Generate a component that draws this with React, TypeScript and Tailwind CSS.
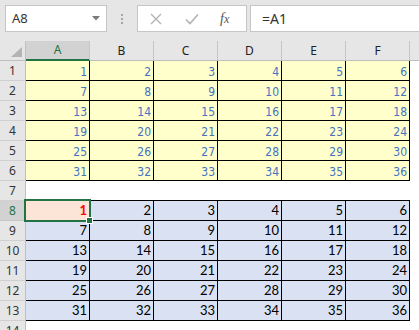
import React from "react";

const COLS = ["A", "B", "C", "D", "E", "F"];

function Toolbar() {
  return (
    <div className="h-[41px] bg-[#e6e6e6] flex items-start pt-[5px] pl-[5px] overflow-hidden">
      <div className="w-[102px] h-[27px] flex-none bg-white border border-[#c6c6c6] flex items-center justify-between pl-[6px] pr-[6px]">
        <span className="text-[13px] text-[#333] font-['Noto_Sans',sans-serif] leading-none">A8</span>
        <svg width="8" height="5" viewBox="0 0 8 5">
          <polygon points="0,0 8,0 4,4.5" fill="#7a7a7a" />
        </svg>
      </div>
      <div className="w-[30px] h-[27px] flex-none flex flex-col items-center justify-center gap-[2px]">
        <span className="w-[2px] h-[2px] bg-[#a6a6a6]" />
        <span className="w-[2px] h-[2px] bg-[#a6a6a6]" />
        <span className="w-[2px] h-[2px] bg-[#a6a6a6]" />
      </div>
      <div className="w-[110px] h-[27px] flex-none bg-white border border-[#c6c6c6] flex items-center pl-[12px]">
        <svg width="12" height="12" viewBox="0 0 12 12" className="flex-none">
          <path d="M1 1 L11 11 M11 1 L1 11" stroke="#b3b3b3" strokeWidth="1.4" fill="none" />
        </svg>
        <svg width="14" height="12" viewBox="0 0 14 12" className="flex-none ml-[23px]">
          <path d="M1 6.5 L5 10.5 L13 1.5" stroke="#b3b3b3" strokeWidth="1.6" fill="none" />
        </svg>
        <span className="ml-[21px] text-[14px] italic text-[#555] font-['Liberation_Serif',serif] leading-none">
          f<span className="text-[12px]">x</span>
        </span>
      </div>
      <div className="w-[180px] h-[27px] flex-none ml-[3px] bg-white border border-[#c6c6c6] flex items-center pl-[11px]">
        <span className="text-[14px] text-[#333] font-['Noto_Sans',sans-serif] leading-none">=A1</span>
      </div>
    </div>
  );
}

export default function App() {
  const rows = Array.from({ length: 14 }, (_, i) => i + 1);
  return (
    <div className="relative w-[419px] h-[330px] overflow-hidden bg-white">
      <Toolbar />
      <div className="grid grid-cols-[26px_repeat(6,64px)_1fr] auto-rows-[20px] font-['Noto_Sans',sans-serif]">
        {/* header row */}
        <div className="bg-[#e6e6e6] border-r border-b border-[#bfbfbf] flex items-end justify-end pr-[3px] pb-[3px]">
          <svg width="11" height="10" viewBox="0 0 11 10">
            <polygon points="11,0 11,10 0,10" fill="#b4b4b4" />
          </svg>
        </div>
        {COLS.map((c) =>
          c === "A" ? (
            <div
              key={c}
              className="bg-[#d2d2d2] border-r border-r-[#c6c6c6] border-b-2 border-b-[#217346] flex items-center justify-center text-[12px] text-[#217346] leading-none"
            >
              {c}
            </div>
          ) : (
            <div
              key={c}
              className="bg-[#e6e6e6] border-r border-r-[#c6c6c6] border-b border-b-[#bfbfbf] flex items-center justify-center text-[12px] text-[#222] leading-none"
            >
              {c}
            </div>
          )
        )}
        <div className="bg-[#e6e6e6] border-b border-[#bfbfbf]" />

        {rows.map((r) => {
          const isTop = r <= 6;
          const isBottom = r >= 8 && r <= 13;
          const sel = r === 8;
          return (
            <React.Fragment key={r}>
              <div
                className={
                  sel
                    ? "bg-[#d2d2d2] border-r border-r-[#bfbfbf] border-b border-b-[#c6c6c6] flex items-center justify-center text-[12px] text-[#217346] leading-none"
                    : "bg-[#e6e6e6] border-r border-r-[#bfbfbf] border-b border-b-[#d0d0d0] flex items-center justify-center text-[12px] text-[#333] leading-none"
                }
              >
                {r}
              </div>
              {COLS.map((c, ci) => {
                if (isTop) {
                  const v = (r - 1) * 6 + ci + 1;
                  return (
                    <div
                      key={c}
                      className="bg-[#ffffcc] border-r border-b border-black flex items-end justify-end pr-[2px] pb-[2px] text-[12px] text-[#4472c4] leading-none font-['DejaVu_Sans_Condensed','DejaVu_Sans',sans-serif] font-stretch-condensed"
                    >
                      {v}
                    </div>
                  );
                }
                if (isBottom) {
                  const v = (r - 8) * 6 + ci + 1;
                  if (sel && ci === 0) {
                    return (
                      <div
                        key={c}
                        className="bg-[#fce4d6] border-r border-b border-black flex items-end justify-end pr-[2px] pb-[3px] text-[13px] text-[#ff0000] font-bold leading-none font-['Lato',sans-serif]"
                      >
                        {v}
                      </div>
                    );
                  }
                  return (
                    <div
                      key={c}
                      className="bg-[#d9e1f2] border-r border-b border-black flex items-end justify-end pr-[2px] pb-[3px] text-[13px] text-black leading-none font-['Lato',sans-serif]"
                    >
                      {v}
                    </div>
                  );
                }
                if (r === 7) {
                  return <div key={c} className="bg-white border-b border-black" />;
                }
                return <div key={c} className="bg-white" />;
              })}
              <div className="bg-white" />
            </React.Fragment>
          );
        })}
      </div>
      {/* selection overlay */}
      <div className="absolute left-[24px] top-[199px] w-[67px] h-[23px] border-2 border-[#217346] pointer-events-none" />
      <div className="absolute left-[86px] top-[217px] w-[7px] h-[7px] bg-[#217346] border border-white pointer-events-none" />
    </div>
  );
}
